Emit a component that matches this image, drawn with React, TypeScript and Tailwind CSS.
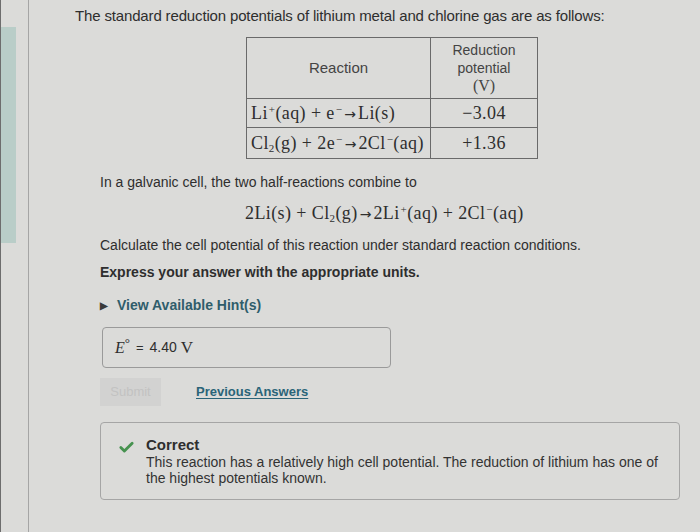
import { Check } from "lucide-react";

const serif = { fontFamily: '"Liberation Serif", "DejaVu Serif", serif' };

function Sup({ children }: { children: React.ReactNode }) {
  return <span className="relative -top-[6px] ml-[1px] text-[11px] leading-none">{children}</span>;
}

function Sub({ children }: { children: React.ReactNode }) {
  return <span className="relative top-[3px] text-[11px] leading-none">{children}</span>;
}

function Arrow() {
  return <span className="mx-[2px] font-['DejaVu_Sans',sans-serif] text-[14px] tracking-normal">&rarr;</span>;
}

export default function App() {
  return (
    <div className="relative w-[700px] h-[532px] overflow-hidden bg-[#dbdbd9] text-[#2e2e2e] font-['Liberation_Sans',Arial,sans-serif]">
      {/* left edge chrome */}
      <div className="absolute left-0 top-0 h-full w-[1px] bg-[#6d6d6d]" />
      <div className="absolute left-[1px] top-[27px] h-[216px] w-[15px] bg-[#b9cdc8]" />
      <div className="absolute left-[28px] top-0 h-full w-[1px] bg-[#a5a5a5]" />

      <div className="pl-[75px] pt-[6px]">
        <p className="text-[15px] leading-[20px] tracking-[-0.15px]">
          The standard reduction potentials of lithium metal and chlorine gas are as follows:
        </p>

        <div className="ml-[171px] mt-[11px]">
          <table className="border-collapse border border-[#6a6a6a] text-[15px]">
            <thead>
              <tr className="h-[61px]">
                <th className="w-[184px] border border-[#6a6a6a] font-normal text-[#444]">Reaction</th>
                <th className="w-[107px] border border-[#6a6a6a] font-normal text-[#444] leading-[18px] text-[14px]">
                  Reduction
                  <br />
                  potential
                  <br />
                  <span style={serif} className="text-[16px]">(V)</span>
                </th>
              </tr>
            </thead>
            <tbody style={serif} className="text-[18px] tracking-[0.4px]">
              <tr className="h-[29px]">
                <td className="border border-[#6a6a6a] px-[4px] whitespace-nowrap">
                  Li<Sup>+</Sup>(aq) + e<Sup>&minus;</Sup>
                  <Arrow />Li(s)
                </td>
                <td className="border border-[#6a6a6a] text-center">&minus;3.04</td>
              </tr>
              <tr className="h-[31px]">
                <td className="border border-[#6a6a6a] px-[4px] whitespace-nowrap">
                  Cl<Sub>2</Sub>(g) + 2e<Sup>&minus;</Sup>
                  <Arrow />2Cl<Sup>&minus;</Sup>(aq)
                </td>
                <td className="border border-[#6a6a6a] text-center">+1.36</td>
              </tr>
            </tbody>
          </table>
        </div>
      </div>

      <div className="pl-[100px] pr-[20px]">
        <p className="mt-[14px] text-[14px] leading-[18px]">In a galvanic cell, the two half-reactions combine to</p>
        <p style={serif} className="mt-[12px] pl-[145px] text-[18px] leading-[20px] tracking-[0.4px] whitespace-nowrap">
          2Li(s) + Cl<Sub>2</Sub>(g)
          <Arrow />2Li<Sup>+</Sup>(aq) + 2Cl<Sup>&minus;</Sup>(aq)
        </p>
        <p className="mt-[12px] text-[14px] leading-[18px]">
          Calculate the cell potential of this reaction under standard reaction conditions.
        </p>
        <p className="mt-[9px] text-[14px] leading-[18px] font-bold">Express your answer with the appropriate units.</p>

        <div className="mt-[14px] flex items-center gap-[9px] text-[14px] font-bold text-[#2f5d6b]">
          <span className="text-[10px] text-[#3a3a3a]">&#9654;</span>
          <span>View Available Hint(s)</span>
        </div>

        <div className="mt-[11px] ml-[2px] flex h-[41px] w-[289px] items-center rounded-[4px] border border-[#9a9a9a] pl-[12px] text-[15px]">
          <span style={serif} className="italic text-[16px]">E</span>
          <span style={serif} className="relative -top-[5px] text-[13px] leading-none">&deg;</span>
          <span className="mx-[6px] text-[13px]">=</span>
          <span className="text-[14px]">4.40</span>
          <span style={serif} className="ml-[4px] text-[17px]">V</span>
        </div>

        <div className="mt-[10px] flex items-center">
          <div className="flex h-[28px] w-[61px] items-center justify-center bg-[#d2d2d1] text-[13px] text-[#c2c2c2]">
            Submit
          </div>
          <span className="ml-[35px] text-[13px] font-bold text-[#2a6478] underline underline-offset-2">
            Previous Answers
          </span>
        </div>

        <div className="mt-[16px] flex h-[78px] w-[580px] rounded-[4px] border border-[#a5a5a5] pl-[17px] pt-[13px]">
          <Check className="mt-[3px] h-[17px] w-[17px] text-[#46924f]" strokeWidth={4} />
          <div className="ml-[11px] text-[14px] leading-[16px]">
            <div className="font-bold text-[15px] leading-[18px]">Correct</div>
            <div className="text-[#333]">
              This reaction has a relatively high cell potential. The reduction of lithium has one of
              <br />
              the highest potentials known.
            </div>
          </div>
        </div>
      </div>
    </div>
  );
}
